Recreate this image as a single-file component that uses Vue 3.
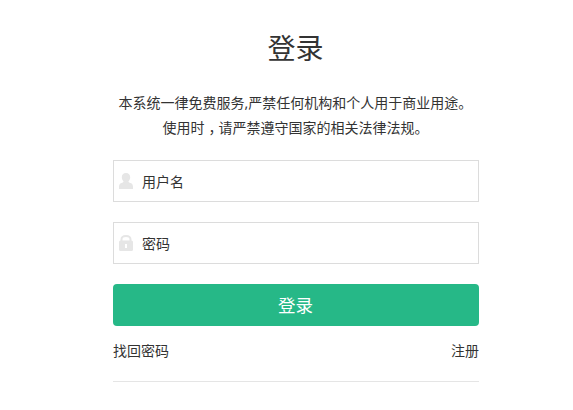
<script setup>
import { ref } from 'vue'
const username = ref('')
const password = ref('')
</script>

<template>
  <main class="login">
    <h1 class="title">登录</h1>
    <p class="notice">本系统一律免费服务,严禁任何机构和个人用于商业用途。<br />使用时<span class="comma">，</span>请严禁遵守国家的相关法律法规。</p>
    <form class="form" @submit.prevent>
      <label class="field">
        <svg class="icon" viewBox="0 0 14 16"><path d="M7 0c2.700 0 4.200 1.700 4.200 4.200 0 1.800-.7 3-1.700 4 0 1 .7 1.300 2 1.700C13.400 10.500 14 12 14 14v2H0v-2c0-2 .6-3.500 2.500-4.100 1.300-.4 2-.7 2-1.700-1-1-1.700-2.200-1.700-4C2.800 1.700 4.300 0 7 0z" /></svg>
        <input v-model="username" type="text" placeholder="用户名" />
      </label>
      <label class="field">
        <svg class="icon" viewBox="0 0 14 16"><path fill-rule="evenodd" d="M1.500 5.500V4.500C1.500 1.500 3.300 0 7 0s5.500 1.500 5.500 4.500v1q1.500 0 1.500 1.500v7.500q0 1.500-1.500 1.500h-11Q0 16 0 14.500V7Q0 5.500 1.500 5.500zM3.500 5.500h7v-1C10.500 2.700 9.300 2 7 2s-3.500.7-3.500 2.500zM6 9v4h2V9z" /></svg>
        <input v-model="password" type="password" placeholder="密码" />
      </label>
      <button class="submit" type="submit">登录</button>
    </form>
    <nav class="links"><span>找回密码</span><span>注册</span></nav>
  </main>
</template>

<style>
body { background: #fff; }
</style>

<style scoped>
.login { box-sizing: border-box; width: 366px; margin-left: 113px; padding-top: 28px; font-family: "Noto Sans", "Noto Sans CJK SC", sans-serif; font-size: 14px; color: #333; }
.title { margin: 0 1px 0 0; font-size: 28px; line-height: 40px; font-weight: 400; text-align: center; }
.notice { margin: 22px 1px 20px 0; line-height: 25px; text-align: center; white-space: nowrap; }
.comma { padding-left: 4px; letter-spacing: -4px; }
.form { display: flex; flex-direction: column; gap: 20px; }
.field { box-sizing: border-box; height: 42px; display: flex; align-items: center; border: 1px solid #dcdcdc; padding-left: 5px; }
.icon { width: 14px; height: 16px; fill: #e6e6e6; }
input { flex: 1; min-width: 0; border: 0; outline: 0; padding: 0; margin-left: 9px; font: inherit; color: #333; background: transparent; }
input::placeholder { color: #333; opacity: 1; }
.submit { height: 42px; border: 0; border-radius: 4px; background: #26b887; color: #fff; font: inherit; font-size: 17.5px; line-height: 42px; padding: 0 1px 0 0; }
.links { display: flex; justify-content: space-between; padding: 15px 0 20px; line-height: 20px; border-bottom: 1px solid #e5e5e5; }
</style>
